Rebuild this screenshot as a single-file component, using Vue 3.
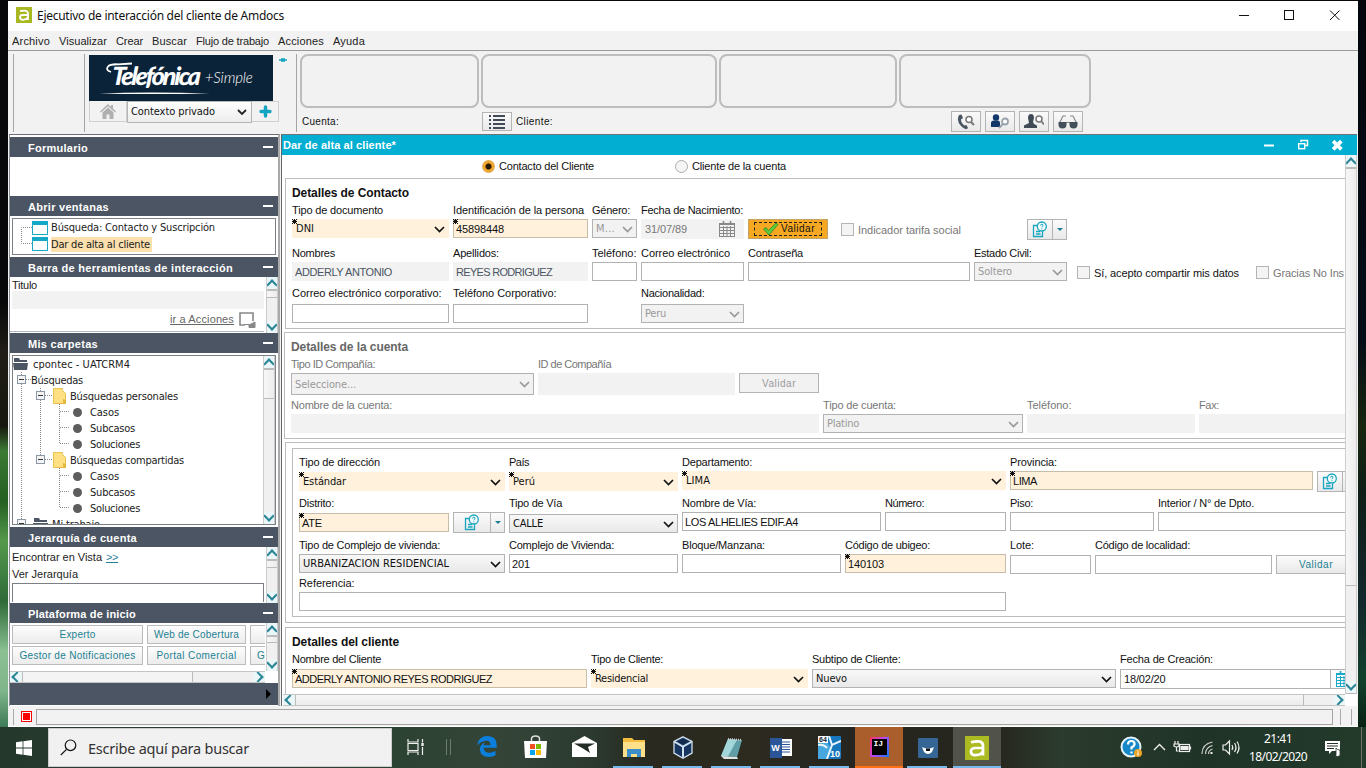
<script setup>
// Sets the letter spacing so that a text run takes the given width.
const vFit = {
  mounted(el, { value }) {
    if (!value) return
    const n = el.textContent.length
    const w = el.getBoundingClientRect().width
    el.style.letterSpacing = `${(value - w) / n}px`
  },
}

const menus = [['Archivo', 38], ['Visualizar', 48], ['Crear', 27], ['Buscar', 35], ['Flujo de trabajo', 73], ['Acciones', 46], ['Ayuda', 32]]
const cards = [179, 236, 178, 192]

const tree = [
  { t: 'Casos', w: 29 }, { t: 'Subcasos', w: 45 }, { t: 'Soluciones', w: 50 },
]
const folders = [{ t: 'Búsquedas personales', w: 108 }, { t: 'Búsquedas compartidas', w: 114 }]

// l: label, lw: label width, w: control width, v: value, vw: value width
const sections = [
  {
    cls: 's1', title: 'Detalles de Contacto', tw: 117,
    rows: [
      { h: 43, f: [
        { k: 'sel', l: 'Tipo de documento', lw: 91, w: 157, v: 'DNI', vw: 18, req: 1 },
        { k: 'inp', l: 'Identificación de la persona', lw: 131, w: 135, v: '45898448', vw: 48, req: 1 },
        { k: 'sel', l: 'Género:', lw: 38, w: 45, v: 'M...', vw: 19, off: 1 },
        { k: 'date', l: 'Fecha de Nacimiento:', lw: 102, w: 103, v: '31/07/89', vw: 42, ro: 1 },
        { k: 'ok', w: 80, v: 'Validar', vw: 34 },
        { k: 'chk', w: 173, pad: 9, v: 'Indicador tarifa social', vw: 103, off: 1 },
        { k: 'ico', w: 40, pad: 9, a: 26 },
      ] },
      { h: 40, f: [
        { k: 'inp', l: 'Nombres', lw: 43, w: 157, v: 'ADDERLY ANTONIO', vw: 97, ro: 1 },
        { k: 'inp', l: 'Apellidos:', lw: 46, w: 135, v: 'REYES RODRIGUEZ', vw: 96, ro: 1 },
        { k: 'inp', l: 'Teléfono:', lw: 44.5, w: 45 },
        { k: 'inp', l: 'Correo electrónico', lw: 89, w: 103 },
        { k: 'inp', l: 'Contraseña', lw: 55, w: 222 },
        { k: 'sel', l: 'Estado Civil:', lw: 57.5, w: 93, v: 'Soltero', vw: 34, off: 1 },
        { k: 'chk', w: 170, pad: 6, v: 'Sí, acepto compartir mis datos', vw: 145 },
        { k: 'chk', w: 120, pad: 5, v: 'Gracias No Ins', vw: 71, off: 1 },
      ] },
      { h: 40, lh: 2, f: [
        { k: 'inp', l: 'Correo electrónico corporativo:', lw: 149.5, w: 157 },
        { k: 'inp', l: 'Teléfono Corporativo:', lw: 103.5, w: 135 },
        { k: 'gap', w: 45 },
        { k: 'sel', l: 'Nacionalidad:', lw: 63.5, w: 103, v: 'Peru', vw: 21, off: 1 },
      ] },
    ],
  },
  {
    cls: 's2', title: 'Detalles de la cuenta', tw: 117, dim: 1,
    rows: [
      { h: 41, f: [
        { k: 'sel', l: 'Tipo ID Compañía:', lw: 84, w: 243, h: 22, v: 'Seleccione...', vw: 61, off: 1 },
        { k: 'inp', l: 'ID de Compañía', lw: 73, w: 197, h: 22, ro: 1 },
        { k: 'btn', w: 80, h: 20, v: 'Validar', vw: 34, off: 1 },
      ] },
      { h: 40, f: [
        { k: 'inp', l: 'Nombre de la cuenta:', lw: 101, w: 528, ro: 1 },
        { k: 'sel', l: 'Tipo de cuenta:', lw: 73, w: 200, v: 'Platino', vw: 32, off: 1 },
        { k: 'inp', l: 'Teléfono:', lw: 44.5, w: 168, ro: 1 },
        { k: 'inp', l: 'Fax:', lw: 20, w: 168, ro: 1 },
      ] },
    ],
  },
  {
    cls: 's3', inner: 1,
    rows: [
      { h: 41, f: [
        { k: 'sel', l: 'Tipo de dirección', lw: 81, w: 206, dy: 1, v: 'Estándar', vw: 43, req: 1 },
        { k: 'sel', l: 'País', lw: 20, w: 169, dy: 1, v: 'Perú', vw: 22, req: 1 },
        { k: 'sel', l: 'Departamento:', lw: 70, w: 324, v: 'LIMA', vw: 24, req: 1 },
        { k: 'inp', l: 'Provincia:', lw: 47, w: 303, v: 'LIMA', vw: 24, req: 1 },
        { k: 'ico', w: 40, a: 26 },
      ] },
      { h: 42, f: [
        { k: 'inp', l: 'Distrito:', lw: 35, w: 150, dy: 1, v: 'ATE', vw: 20, req: 1 },
        { k: 'ico', w: 52, a: 38 },
        { k: 'sel', l: 'Tipo de Vía', lw: 53, w: 169, dy: 2, v: 'CALLE', vw: 30 },
        { k: 'inp', l: 'Nombre de Vía:', lw: 74, w: 199, v: 'LOS ALHELIES EDIF.A4', vw: 113 },
        { k: 'inp', l: 'Número:', lw: 39, w: 121 },
        { k: 'inp', l: 'Piso:', lw: 23, w: 144 },
        { k: 'inp', l: 'Interior / N° de Dpto.', lw: 96, w: 230 },
      ] },
      { h: 38, f: [
        { k: 'sel', l: 'Tipo de Complejo de vivienda:', lw: 141, w: 206, v: 'URBANIZACION RESIDENCIAL', vw: 146 },
        { k: 'inp', l: 'Complejo de Vivienda:', lw: 105, w: 169, v: '201', vw: 18 },
        { k: 'inp', l: 'Bloque/Manzana:', lw: 83, w: 159 },
        { k: 'inp', l: 'Código de ubigeo:', lw: 85, w: 161, v: '140103', vw: 36, req: 1 },
        { k: 'inp', l: 'Lote:', lw: 24, w: 81, dy: 1 },
        { k: 'inp', l: 'Código de localidad:', lw: 95, w: 177, dy: 1 },
        { k: 'btn', w: 80, h: 19, dy: 1, v: 'Validar', vw: 34 },
      ] },
      { h: 40, f: [{ k: 'inp', l: 'Referencia:', lw: 55.5, w: 707 }] },
    ],
  },
  {
    cls: 's4', title: 'Detalles del cliente', tw: 107,
    rows: [
      { h: 40, lh: 1, f: [
        { k: 'inp', l: 'Nombre del Cliente', lw: 89, w: 295, v: 'ADDERLY ANTONIO REYES RODRIGUEZ', vw: 197, req: 1 },
        { k: 'sel', l: 'Tipo de Cliente:', lw: 72, w: 217, v: 'Residencial', vw: 53, req: 1 },
        { k: 'sel', l: 'Subtipo de Cliente:', lw: 88.5, w: 304, v: 'Nuevo', vw: 31 },
        { k: 'date', l: 'Fecha de Creación:', lw: 93, w: 233, v: '18/02/20', vw: 41.5 },
      ] },
    ],
  },
]
const px = (n) => `${n}px`
</script>

<template>
  <div class="screen">
    <div class="desk">
      <div class="edge left"></div>
      <div class="win">
        <header class="title">
          <svg class="appico" width="16" height="16" viewBox="0 0 16 16"><rect width="16" height="16" fill="#a9b821" /><path d="M4 4.200Q12 2.200 12 6.500V13M12 8H7Q4 8 4 10.300 4 12.800 7 12.800 11 12.600 12 10" fill="none" stroke="#fff" stroke-width="1.800" /></svg>
          <span class="ui" v-fit="247">Ejecutivo de interacción del cliente de Amdocs</span>
          <svg class="winbtns" width="110" height="16" viewBox="0 0 110 16" fill="none" stroke="#111" stroke-width="1"><path d="M1 8.500h10" /><rect x="46.500" y="3.500" width="9" height="9" /><path d="M92 3.500l9.500 9.500M101.500 3.500l-9.500 9.500" /></svg>
        </header>
        <nav class="menu"><span v-for="m in menus" :key="m[0]" v-fit="m[1]">{{ m[0] }}</span></nav>

        <div class="tools">
          <i class="vl v1"></i><i class="vl v2"></i>
          <div class="brand">
            <div class="logo">
              <svg class="swoosh" width="184" height="46" viewBox="0 0 184 46"><path d="M10 38.500Q60 36.400 121 38.500 60 39.600 10 38.500z" fill="#fff" /><path d="M22 17Q16 15 19 11.500 21 9 29 9.300L43 8.500" fill="none" stroke="#fff" stroke-width="1.800" /></svg>
              <b v-fit="90">Telefónica</b><em v-fit="48">+Simple</em>
            </div>
            <div class="ctx">
              <div class="home"><svg width="16" height="15" viewBox="0 0 16 15" fill="#b0b0b0"><path d="M8 0L0 7.500l1 1L8 2.200l7 6.300 1-1-3-2.800V1h-2v2z" /><path d="M2.500 8.500L8 3.500l5.500 5V15H9.500v-4.500h-3V15h-4z" /></svg></div>
              <div class="ctxsel tah"><span v-fit="84">Contexto privado</span><svg width="10" height="7" viewBox="0 0 10 7"><path d="M1 1l4 4 4-4" fill="none" stroke="#222" stroke-width="1.800" /></svg></div>
              <div class="plus"><svg width="13" height="13" viewBox="0 0 13 13"><path d="M6.500 2v9M2 6.500h9" stroke="#12a5c2" stroke-width="3.400" stroke-linecap="round" /></svg></div>
            </div>
          </div>
          <svg class="pin" width="8" height="4" viewBox="0 0 8 4"><path d="M0 2h8M2 1h4M2 3h4" stroke="#12a5c2" stroke-width="1.400" /></svg>
          <i class="vl v3"></i>
          <div class="info">
            <div class="cards"><div v-for="(c, i) in cards" :key="i" :style="{ width: px(c) }"></div></div>
            <div class="acct">
              <span class="cu" v-fit="37">Cuenta:</span>
              <div class="ib list"><svg width="17" height="14" viewBox="0 0 17 14"><path d="M0 1h2M0 5h2M0 9h2M0 13h2M4 1h12M4 5h12M4 9h12M4 13h12" stroke="#414b58" stroke-width="2" /></svg></div>
              <span class="cl" v-fit="37">Cliente:</span>
              <div class="ibs">
                <div class="ib"><svg width="18" height="16" viewBox="0 0 18 16"><path d="M2 1Q-1 7 4 12t7 2l-1.500-3-2 .5Q4 9 4 5.500L6 4 4.500.5z" fill="#4b5461" /><circle cx="12" cy="5.500" r="3" fill="#fff" stroke="#777" stroke-width="1.500" /><path d="M14 8l3 3" stroke="#777" stroke-width="2" /></svg></div>
                <div class="ib"><svg width="20" height="16" viewBox="0 0 20 16"><circle cx="6" cy="3.500" r="3.200" fill="#12376b" /><path d="M1 13V9Q1 6.500 4 6.500h4Q10 6.500 10 9v4z" fill="#12376b" /><circle cx="15" cy="7.500" r="3" fill="#fff" stroke="#9aa4ae" stroke-width="1.800" /><path d="M13 10l-4 4" stroke="#9aa4ae" stroke-width="2" /></svg></div>
                <div class="ib"><svg width="20" height="16" viewBox="0 0 20 16"><path d="M4 4Q4 0 7 0t3 4L9 8l1 2 3 1.500V14H0v-2.500L5 9z" fill="#414b58" /><circle cx="15" cy="5" r="3" fill="#fff" stroke="#777" stroke-width="1.500" /><path d="M17 7l3 3.500" stroke="#777" stroke-width="1.800" /></svg></div>
                <div class="ib"><svg width="20" height="16" viewBox="0 0 20 16"><path d="M1.500 9L5 2h3M18.500 9L15 2h-3M8 8.500h4" fill="none" stroke="#888" stroke-width="1.200" /><path d="M.5 8h8v2.500a4 4 0 0 1-8 0zM11.500 8h8v2.500a4 4 0 0 1-8 0z" fill="#454f5b" /></svg></div>
              </div>
            </div>
          </div>
        </div>

        <div class="main">
          <aside>
            <div class="hd"><b v-fit="60">Formulario</b><i></i></div>
            <div class="bd b1"></div>
            <div class="hd"><b v-fit="81">Abrir ventanas</b><i></i></div>
            <div class="bd b2"><div class="wins tah">
              <svg class="wl" width="12" height="22" viewBox="0 0 12 22"><path d="M11 2.500H.5v16H11" fill="none" stroke="#888" stroke-dasharray="1 1" /></svg>
              <div class="wlist">
                <div><svg width="16" height="14" viewBox="0 0 16 14"><rect x=".5" y=".5" width="15" height="13" fill="#fff" stroke="#12a9c6" /><rect y="0" width="16" height="4" fill="#12a9c6" /></svg><span v-fit="164">Búsqueda: Contacto y Suscripción</span></div>
                <div><svg width="16" height="14" viewBox="0 0 16 14"><rect x=".5" y=".5" width="15" height="13" fill="#fff" stroke="#12a9c6" /><rect y="0" width="16" height="4" fill="#12a9c6" /></svg><span class="on"><span v-fit="99">Dar de alta al cliente</span></span></div>
              </div>
            </div></div>
            <div class="hd"><b v-fit="205">Barra de herramientas de interacción</b><i></i></div>
            <div class="bd b3">
              <div class="b3l"><span v-fit="25">Titulo</span><p></p><div class="go"><u v-fit="64">ir a Acciones</u><svg width="18" height="16" viewBox="0 0 18 16"><path d="M6 13H1V1h13v8" fill="none" stroke="#888" stroke-width="1.600" /><path d="M5 12.500h6M10 13l6-3v5.500h-6z" fill="#888" stroke="#888" /></svg></div></div>
              <div class="vs"><i class="up"></i><i class="th"></i><i class="dn"></i></div>
            </div>
            <div class="hd"><b v-fit="70">Mis carpetas</b><i></i></div>
            <div class="bd b4"><div class="tree tah">
              <div class="nodes">
                <svg class="lines" width="70" height="170" viewBox="0 0 70 170"><path d="M8.500 16v152M11 23.500h7M27.500 32v72M32 39.500h7M32 103.500h7M46.500 48v40M47 55.500h10M47 71.500h10M47 87.500h10M46.500 112v40M47 119.500h10M47 135.500h10M47 151.500h10" fill="none" stroke="#888" stroke-dasharray="1 1" /><g fill="#f4f4f4" stroke="#8a97a5"><rect x="4.500" y="19.500" width="8" height="8" /><rect x="23.500" y="35.500" width="8" height="8" /><rect x="23.500" y="99.500" width="8" height="8" /><rect x="4.500" y="163.500" width="8" height="8" /></g><path d="M6 23.500h5M25 39.500h5M25 103.500h5M6 167.500h5" stroke="#333" /></svg>
                <div class="n n0"><svg width="15" height="12" viewBox="0 0 15 12"><path d="M1 3V0h5l1 2h7v2H1zM0 5h15l-1 7H1z" fill="#4b5563" /></svg><span v-fit="97">cpontec - UATCRM4</span></div>
                <div class="n n1"><span v-fit="52">Búsquedas</span></div>
                <template v-for="f in folders" :key="f.t">
                  <div class="n n2"><svg width="13" height="16" viewBox="0 0 13 16"><path d="M.5.5h9v2l3 3v10H.5z" fill="#ffe184" stroke="#e8c24c" /><path d="M10 11v5h3v-4z" fill="#e5b93c" /></svg><span v-fit="f.w">{{ f.t }}</span></div>
                  <div v-for="t in tree" :key="t.t" class="n n3"><i></i><span v-fit="t.w">{{ t.t }}</span></div>
                </template>
                <div class="n n4"><svg width="15" height="12" viewBox="0 0 15 12"><path d="M1 3V0h5l1 2h7v2H1zM0 5h15l-1 7H1z" fill="#4b5563" /></svg><span v-fit="48">Mi trabajo</span></div>
              </div>
              <div class="vs"><i class="up"></i><i class="th big"></i><i class="dn"></i></div>
            </div></div>
            <div class="hd"><b v-fit="109">Jerarquía de cuenta</b><i></i></div>
            <div class="bd b5">
              <div class="b5l"><div><span v-fit="90">Encontrar en Vista</span><u v-fit="12">&gt;&gt;</u></div><div><span v-fit="66">Ver Jerarquía</span></div><p></p></div>
              <div class="vs"><i class="up"></i><i class="th"></i><i class="dn"></i></div>
            </div>
            <div class="hd"><b v-fit="108">Plataforma de inicio</b><i></i></div>
            <div class="bd b6">
              <div class="b6t">
                <div class="links">
                  <div class="lk"><span v-fit="36">Experto</span></div><div class="lk"><span v-fit="85">Web de Cobertura</span></div><div class="lk"></div>
                  <div class="lk"><span v-fit="116">Gestor de Notificaciones</span></div><div class="lk"><span v-fit="80">Portal Comercial</span></div><div class="lk cut"><span>G</span></div>
                </div>
                <div class="vs"><i class="up"></i><i class="th sm"></i><i class="dn"></i></div>
              </div>
              <div class="hs"><i class="lf"></i><i class="th"></i><i class="rt"></i></div>
            </div>
            <div class="foot"><svg width="6" height="10" viewBox="0 0 6 10"><path d="M0 0l5 5-5 5z" fill="#000" /></svg></div>
          </aside>

          <section class="mdi">
            <div class="mt"><b v-fit="113">Dar de alta al cliente*</b>
              <svg width="90" height="14" viewBox="0 0 90 14"><path d="M1 7.500h10" stroke="#fff" stroke-width="2" /><path d="M38 4V2.500h6.500v5H42" fill="none" stroke="#fff" stroke-width="1.500" /><rect x="35.700" y="5.700" width="6" height="5" fill="none" stroke="#fff" stroke-width="1.400" /><path d="M71.500 4.500l5.500 5.500M77 4.500L71.500 10" stroke="#fff" stroke-width="3.800" stroke-linecap="square" /></svg>
            </div>
            <div class="mc">
              <div class="pane">
                <div class="radios"><i class="rd on"></i><span v-fit="95">Contacto del Cliente</span><i class="rd two"></i><span v-fit="94">Cliente de la cuenta</span></div>
                <div v-for="s in sections" :key="s.cls" class="sec" :class="[s.cls, { dim: s.dim }]">
                  <h3 v-if="s.title"><span v-fit="s.tw">{{ s.title }}</span></h3>
                  <div :class="{ inner: s.inner }">
                    <div v-for="(r, ri) in s.rows" :key="ri" class="row" :style="{ height: px(r.h) }">
                      <div v-for="(f, fi) in r.f" :key="fi" class="fld" :style="{ width: px(f.w), marginLeft: px(f.pad || 0) }">
                        <div class="lab" :style="{ height: px(17 + (r.lh || 0)) }"><span v-if="f.l" v-fit="f.lw">{{ f.l }}</span></div>
                        <div v-if="f.k !== 'gap'" class="ctl" :class="[f.k, { req: f.req, off: f.off, ro: f.ro }]" :style="{ marginTop: px(f.dy || 0), height: f.h ? px(f.h) : null }">
                          <svg v-if="f.req" class="ast" width="5" height="5" viewBox="0 0 5 5" shape-rendering="crispEdges"><path d="M2 0h1v5H2zM0 2h5v1H0zM1 1h3v3H1zM0 0h1v1H0zM4 0h1v1H4zM0 4h1v1H0zM4 4h1v1H4z" fill="#111" /></svg>
                          <template v-if="f.k === 'ico'">
                            <div class="ia" :style="{ width: px(f.a) }"><svg width="16" height="17" viewBox="0 0 16 17" fill="none" stroke="#1aa6c1" stroke-width="1.300"><path d="M5 4.500H1.500v11h9v-5M4 10.500h4M4 13h4.500" /><circle cx="9.800" cy="5.500" r="4.500" fill="#f4fbfc" /><path d="M8.500 4.500Q8.700 3 10 3.200t1 1.600Q10 5.300 9.900 6.300M9.900 7.300v1" stroke-width="1" /></svg></div>
                            <div class="ibx"><svg width="6" height="3" viewBox="0 0 6 3"><path d="M0 0h6L3 3z" fill="#1b7f95" /></svg></div>
                          </template>
                          <template v-else>
                            <i v-if="f.k === 'chk'" class="box"></i>
                            <svg v-if="f.k === 'ok'" width="17" height="14" viewBox="0 0 17 14"><path d="M1.500 7L4 5.500l2.500 3L14 1l2 1.500L7 13z" fill="#5fcb3c" stroke="#2d8a1c" stroke-width=".8" /></svg>
                            <span v-if="f.v" v-fit="f.vw">{{ f.v }}</span>
                            <svg v-if="f.k === 'sel'" class="chev" width="11" height="7" viewBox="0 0 11 7"><path d="M1 1l4.500 4.500L10 1" fill="none" stroke="currentColor" stroke-width="1.700" /></svg>
                            <div v-if="f.k === 'date'" class="cal"><svg width="16" height="16" viewBox="0 0 16 16" fill="none" stroke="currentColor" stroke-width="1"><rect x=".5" y="2.500" width="15" height="13" /><path d="M1 3.500h14M.5 6.500h15M.5 9.500h15M.5 12.500h15M4.500 5v10M8 5v10M11.500 5v10" /><path d="M4.500 0v4M11.500 0v4" stroke-width="1.600" /></svg></div>
                          </template>
                        </div>
                      </div>
                    </div>
                  </div>
                </div>
              </div>
              <div class="vs pv"><i class="up"></i><i class="th"></i><i class="dn"></i></div>
            </div>
            <div class="hs ph"><i class="lf"></i><i class="th"></i><i class="rt"></i></div>
          </section>
        </div>
        <div class="status"><i class="sv"></i><i class="red"></i><i class="sb"></i><i class="sv e"></i><i class="sv f"></i></div>
      </div>
      <div class="edge right"></div>
    </div>

    <footer class="task">
      <div class="start"><svg width="16" height="16" viewBox="0 0 16 16" fill="#fff"><path d="M0 2.300l6.600-1v6.300H0zM7.400 1.200L16 0v7.600H7.400zM0 8.400h6.600v6.300l-6.600-1zM7.400 8.400H16V16l-8.600-1.200z" /></svg></div>
      <div class="search"><svg width="17" height="17" viewBox="0 0 17 17" fill="none" stroke="#111" stroke-width="1.200"><circle cx="10.500" cy="6.300" r="5.300" /><path d="M6.500 10.300L.8 16" /></svg><span v-fit="161">Escribe aquí para buscar</span></div>
      <div class="tb tv"><svg width="18" height="16" viewBox="0 0 18 16" fill="none" stroke="#eee" stroke-width="1.200"><path d="M1 0v3h10V0M1 16v-3h10v3M1 4.500h10v7H1zM15.500 0v3.500M15.500 8v8" /><path d="M15.500 4v3" stroke-width="2.400" /></svg></div>
      <div class="tb sep"><i></i><i></i></div>
      <div class="tb"><svg width="20" height="21" viewBox="0 0 20 21"><path d="M0 9.500Q1.500 0 10.500 0 20 .5 19.700 9v2.700H6.500Q7 16.500 12.500 16.800q3 0 6-1.700V19.300Q16 21 11.800 21 3.500 20.700 2.800 13.500 3 8.500 8 6.200q-1.300 1.400-1.500 3h7Q13.400 5 10 4.800 4 4.800 0 9.500z" fill="#0c7fdc" /></svg></div>
      <div class="tb"><svg width="23" height="24" viewBox="0 0 23 24"><path d="M7.500 7V4q0-3 4-3t4 3v3" fill="none" stroke="#ddd" stroke-width="1.500" /><path d="M0 6h23l-1 17H1z" fill="#fff" /><path d="M6 9h5v5H6z" fill="#f25022" /><path d="M12 9h5v5h-5z" fill="#7fba00" /><path d="M6 15h5v5H6z" fill="#00a4ef" /><path d="M12 15h5v5h-5z" fill="#ffb900" /></svg></div>
      <div class="tb"><svg width="25" height="21" viewBox="0 0 25 21"><path d="M0 7L12.500 0 25 7v14H0z" fill="#fff" /><path d="M2 7.500h21l-7 3.500 2 6-7-4.500z" fill="#222b24" /></svg></div>
      <div class="tb run"><svg width="22" height="19" viewBox="0 0 22 19"><path d="M0 0h9l2 2h11v17H0z" fill="#f3bd41" /><path d="M0 4h22v15H0z" fill="#ffe08a" /><path d="M4 19v-8h14v8h-4v-3H8v3z" fill="#3c8ecb" /></svg></div>
      <div class="tb run"><svg width="20" height="23" viewBox="0 0 20 23"><path d="M10 .8l9 4.700v11.500l-9 5.200-9-5.200V5.500z" fill="#17365f" stroke="#d2e1f0" stroke-width="1.300" /><path d="M1 5.500l9 5 9-5M10 10.500v11" fill="none" stroke="#d2e1f0" stroke-width="2" /><path d="M5 5.500l5-2.500 5 2.500-5 2.700z" fill="#152b4b" /></svg></div>
      <div class="tb run"><svg width="22" height="22" viewBox="0 0 22 22"><path d="M7 2l14 1-5 17-16-1z" fill="#5f9ea6" /><path d="M7 2l9 .7L7 19.500l-7-.5z" fill="#a3d6da" /><path d="M0 19l16 1 1 2H3z" fill="#dfe5e5" /><path d="M7 2l14 1" stroke="#ccc" stroke-dasharray="1 1" stroke-width="2" /></svg></div>
      <div class="tb run"><div class="word"><b>W</b><svg width="10" height="17" viewBox="0 0 10 17"><rect width="10" height="17" fill="#fff" /><path d="M0 3h8M0 5.500h8M0 8h8M0 10.500h8M0 13h8" stroke="#2a5699" /></svg></div></div>
      <div class="tb run"><div class="vm"><svg width="23" height="23" viewBox="0 0 23 23"><rect width="23" height="23" rx="1" fill="#1878bd" /><path d="M0 7h10l3 5-4 11H0z" fill="#46a8df" /><path d="M11 0l3 9 9-4M14 9l-5 14M0 9q6-1 9 3" stroke="#e9f5fd" stroke-width="2" fill="none" /><path d="M0 0h10v7H0z" fill="#fff" /></svg><b class="v64">64</b><b class="v10">10</b></div></div>
      <div class="tb ij"><div class="ijb"><b>IJ</b></div></div>
      <div class="tb run"><svg width="20" height="20" viewBox="0 0 20 20"><rect width="20" height="20" rx="1" fill="#356695" /><path d="M4 9Q10 12 16 9l-2 5q-4 4-8 0z" fill="#fff" /><path d="M8 10.500h4v2.500H8z" fill="#111" /></svg></div>
      <div class="tb act"><svg width="24" height="24" viewBox="0 0 16 16"><rect width="16" height="16" fill="#adbb22" /><path d="M4 4.200Q12 2.200 12 6.500V13M12 8H7Q4 8 4 10.300 4 12.800 7 12.800 11 12.600 12 10" fill="none" stroke="#fff" stroke-width="1.800" /></svg></div>
      <div class="tray">
        <svg width="126" height="26" viewBox="0 0 126 26" fill="none" stroke="#eee" stroke-width="1.200">
          <circle cx="11" cy="12" r="9.500" fill="#1688c8" stroke="#e6f3fa" stroke-width="2" /><path d="M8 9.500Q8 6 11.300 6t3.300 3.300Q14.300 11 11.500 12.500v2M11.500 16.500v2" stroke="#fff" stroke-width="2.200" /><circle cx="18" cy="18" r="4" fill="#eba528" stroke="none" /><path d="M18 15.500v1M18 17.500v3" stroke="#fff" />
          <path d="M34 15l5.500-5.500L45 15" stroke-width="1.400" /><rect x="59.500" y="9.500" width="10" height="7" /><path d="M61 11.500h7v3h-7z" fill="#eee" /><path d="M55 6v3M58 6v3M54 9h5v2q-2.500 2-5 0zM56.500 12v4h2M70.500 11.500v3" />
          <path d="M82 19Q82 9 92.500 7M85.500 19Q85.500 12.500 92.500 10.500M88.500 19Q88.500 15.500 92.500 14" stroke="#ccc" /><path d="M91.500 17v2" stroke-width="2" /><path d="M103 10h2.500l4-4v13l-4-4H103zM112 10q1.500 2.500 0 5M114.500 8q3 4.500 0 9M117 6.500q4 6 0 12" />
        </svg>
      </div>
      <div class="clock"><span v-fit="28">21:41</span><span v-fit="58">18/02/2020</span></div>
      <svg class="note" width="18" height="18" viewBox="0 0 18 18"><path d="M1 1h15v10h-8l-3 3v-3H1z" fill="#fff" /><path d="M3 3.500h11M3 6h11M3 8.500h7" stroke="#25332a" /><path d="M12 15.500V8q1 2 4 2v3q1 3-2 3.500-3 .5-2-1" fill="#fff" stroke="#25332a" stroke-width=".8" /></svg>
      <i class="show"></i>
    </footer>
  </div>
</template>

<style>
html, body { margin: 0; background: #000; overflow: hidden; }
</style>

<style scoped>
* { box-sizing: border-box; }
.screen { width: 1366px; height: 768px; overflow: hidden; display: flex; flex-direction: column; background: #08080a; font: 11px/16px "Liberation Sans", Arial, sans-serif; color: #111; }
span, b, em, u { white-space: nowrap; flex: none; display: inline-block; }
svg { display: block; flex: none; }
i { display: block; flex: none; }
p { margin: 0; }
.tah { font-family: "DejaVu Sans Condensed", "Noto Sans", sans-serif; font-size: 11px; }
.desk { display: flex; height: 727px; padding-top: 1px; }
.edge.left { width: 8px; background: linear-gradient(#08080a 0, #08080a 300px, #201d17 350px, #17170f 425px, #3c7a34 450px, #246022 500px, #54994c 540px, #2f6a38 600px, #8ac092 650px, #7fb58a 690px, #3e7a58); }
.edge.right { width: 8px; background: linear-gradient(#02060c 0, #040d16 340px, #18250f 425px, #0d1e16 490px, #14272b 600px, #12402c 680px, #092014); }
.win { width: 1350px; height: 726px; background: #f2f2f2; display: flex; flex-direction: column; }
.title { height: 30px; background: #fff; display: flex; align-items: center; padding: 0 18px 2px 8px; }
.ui { font: 12px/20px "Noto Sans", sans-serif; margin-left: 5px; margin-top: 2px; }
.winbtns { margin-left: auto; margin-right: -8px; }
.menu { height: 20px; border-bottom: 1px solid #9a9a9a; display: flex; gap: 9px; padding: 2px 0 0 4px; line-height: 17px; color: #222; }
.tools { height: 83px; display: flex; padding-top: 3px; }
.vl { width: 1px; height: 78px; background: #a5a5a5; }
.v1 { margin-left: 5px; }
.v2 { margin-left: 70px; }
.v3 { margin-left: 9px; }
.brand { margin-left: 4px; width: 190px; }
.logo { width: 184px; height: 46px; margin-top: 1px; background: #0b2338; color: #fff; position: relative; display: flex; padding-left: 23px; }
.logo b { font: italic 900 25px/41px Lato, sans-serif; transform: skewX(-4deg); }
.logo em { font: italic 300 15px/45px Lato, sans-serif; margin-left: 6px; }
.swoosh { position: absolute; left: 0; top: 0; }
.ctx { display: flex; height: 22px; }
.home { width: 38px; height: 21px; border: 1px solid #cfcfcf; border-top: 0; display: grid; place-items: center; }
.ctxsel { width: 125px; height: 22px; border: 1px solid #b5b5b5; background: linear-gradient(#fff, #ececec); display: flex; align-items: center; justify-content: space-between; padding: 0 4px 0 3px; }
.plus { width: 27px; height: 21px; border: 1px solid #cfcfcf; border-left: 0; display: grid; place-items: center; }
.pin { margin: 4px 0 0; }
.info { margin-left: 3px; width: 1050px; }
.cards { display: flex; gap: 2px; padding-left: 0; }
.cards div { height: 54px; border: 2px solid #bdbdbd; border-radius: 8px; }
.acct { display: flex; height: 24px; align-items: center; margin-top: 1px; font-size: 10px; padding-left: 2px; }
.acct span { margin-top: 2px; }
.ib { width: 30px; height: 21px; border: 1px solid #b4b4b4; background: linear-gradient(#fafafa, #e9e9e9); display: grid; place-items: center; }
.list { margin: 1px 0 0 143px; height: 19px; }
.cl { margin-left: 4px; }
.ibs { display: flex; gap: 4px; margin: 1px 0 0 398px; }
.main { display: flex; height: 572px; }
aside { width: 271px; margin-left: 1px; height: 572px; border: 1px solid #8a8f96; border-bottom: 0; border-right: 2px solid #a9a9a9; border-top: 1px solid #6b6f75; padding-top: 2px; background: #fff; }
.hd { height: 20px; background: #4b5563; color: #fff; display: flex; align-items: center; padding: 2px 5px 0 18px; justify-content: space-between; line-height: 18px; }
.hd i { width: 10px; height: 2px; background: #fff; margin-top: -2px; }
.b1 { height: 39px; }
.b2 { height: 41px; padding: 2px; }
.wins { height: 37px; width: 264px; border: 1px solid #7b8087; display: flex; padding: 1px 0 0 8px; }
.wl { margin-top: 5px; }
.wlist > div { display: flex; height: 16px; align-items: center; gap: 3px; margin-left: -1px; }
.wlist .on { background: #fbe0ad; height: 15px; line-height: 15px; padding-right: 2px; }
.bd { color: #1c1c1c; }
.b3 { height: 56px; display: flex; justify-content: space-between; }
.b3l { padding-left: 2px; width: 254px; border-bottom: 1px solid #b3b9c2; margin-bottom: 1px; }
.b3l > span { display: block; width: max-content; }
.b3l p { height: 18px; background: #f2f2f2; margin-top: -2px; }
.go { display: flex; justify-content: flex-end; padding-right: 7px; gap: 5px; color: #666; margin-top: 3px; align-items: flex-start; }
.go u { line-height: 14px; }
.vs { width: 12px; display: flex; flex-direction: column; background: #f0f0f0; border: 1px solid #ccc; border-width: 0 1px; height: 100%; }
.vs i { width: 100%; }
.vs .up, .vs .dn, .hs .lf, .hs .rt { background: #eaf6f8; height: 12px; display: grid; place-items: center; overflow: hidden; }
.vs .up::before, .vs .dn::before, .hs .lf::before, .hs .rt::before { content: ""; width: 6px; height: 6px; border: solid #2a8596; border-width: 2px 0 0 2px; transform: translateY(2px) rotate(45deg); }
.vs .dn { margin-top: auto; }
.vs .dn::before { transform: translateY(-2px) rotate(225deg); }
.hs .lf::before { transform: translateX(1px) rotate(-45deg); }
.hs .rt::before { transform: translateX(-1px) rotate(135deg); }
.vs .th { height: 9px; border: 1px solid #bbb; border-width: 2px 0 1px; background: linear-gradient(90deg, #f7f7f7, #ececec); }
.b4 { height: 174px; padding: 2px; }
.tree { height: 170px; width: 264px; border: 1px solid #7b8087; display: flex; justify-content: space-between; overflow: hidden; }
.nodes { position: relative; height: 168px; }
.lines { position: absolute; left: 0; top: 0; }
.n { position: relative; height: 16px; line-height: 16px; display: flex; align-items: center; gap: 5px; }
.n span { margin-top: 2px; }
.n1 { padding-left: 18px; }
.n2 { padding-left: 40px; gap: 4px; }
.n3 { padding-left: 60px; gap: 8px; }
.n3 i { width: 9px; height: 9px; border-radius: 50%; background: #5d5d5d; }
.n4 { padding-left: 20px; gap: 4px; }
.vs .th.big { height: 31px; }
.b5 { height: 56px; display: flex; justify-content: space-between; }
.b5l { padding: 1px 0 0 2px; width: 254px; }
.b5l div { display: flex; gap: 4px; height: 17px; line-height: 18px; }
.b5l u { color: #1f7f98; }
.b5l p { height: 19px; margin-top: 1px; width: 252px; border: 1px solid #7b8087; border-bottom: 0; }
.b6 { height: 60px; }
.b6t { display: flex; height: 48px; justify-content: space-between; }
.links { width: 255px; overflow: hidden; display: grid; grid-template-columns: 131px 99px 60px; grid-template-rows: 19px 19px; column-gap: 4px; row-gap: 2px; padding: 2px 0 0 2px; }
.lk { border: 1px solid #bcbcbc; background: linear-gradient(#fdfdfd, #ececec); color: #237f91; text-align: center; line-height: 17px; font-size: 10px; }
.cut { text-align: left; padding-left: 6px; }
.vs .th.sm { height: 8px; }
.hs { display: flex; height: 12px; background: #f0f0f0; border: 1px solid #c4c4c4; border-width: 1px 0; }
.hs .lf, .hs .rt { width: 12px; height: 100%; }
.b6 .hs { width: 255px; }
.b6 .hs .th { width: 171px; background: #f4f4f4; border: solid #bbb; border-width: 0 1px; }
.hs .rt { margin-left: auto; }
.foot { height: 22px; background: #4b5563; display: flex; justify-content: flex-end; align-items: center; padding-right: 6px; }
.mdi { margin-left: 1px; width: 1076px; border-left: 1px solid #63676c; border-top: 1px solid #6e7277; padding-left: 1px; background: #fff; }
.mt { height: 20px; margin-left: -1px; background: #02aed2; color: #fff; display: flex; justify-content: space-between; align-items: center; padding: 0 4px 0 1px; }
.mc { display: flex; height: 539px; }
.pane { width: 1062px; overflow: hidden; background: #fff; height: 539px; }
.radios { display: flex; height: 22px; margin-bottom: 1px; padding-left: 199px; align-items: center; }
.rd { width: 13px; height: 13px; border-radius: 50%; border: 1px solid #aaa; background: #f5f5f5; margin-right: 4px; }
.rd.on { border: 0; background: radial-gradient(circle, #2a1a05 0 2.600px, #efa62e 3.500px 5px, #d9b06d 6.500px); }
.rd.two { margin-left: 81px; }
.sec { width: 1300px; border: 1px solid #bcbcbc; margin-left: 2px; padding-left: 6px; }
.s1 { height: 151px; }
.s2 { height: 107px; margin: 3px 0 0 1px; }
.s3 { height: 181px; margin-top: 3px; padding-top: 5px; }
.s4 { height: 120px; margin-top: 4px; }
h3 { margin: 0; height: 23px; font: bold 12px/28px "Liberation Sans", Arial, sans-serif; }
.inner { border: 1px solid #bcbcbc; height: 169px; padding: 5px 0 0 6px; }
.row { display: flex; gap: 4px; align-items: flex-start; }
.fld { flex: none; }
.lab { line-height: 16px; height: 17px; }
.dim .lab, .dim h3 { color: #777; }
.dim h3 { color: #666; }
.ctl { position: relative; height: 19px; display: flex; align-items: center; }
.inp, .sel, .date { border: 1px solid #b2b2b2; background: #fff; padding-left: 3px; }
.inp { padding-left: 2px; }
.sel { font-family: "DejaVu Sans Condensed", "Noto Sans", sans-serif; background: linear-gradient(#f8f8f8, #e9e9e9); }
.sel span { margin-top: 1px; }
.sel.req { background: #fff1dc; border-color: #fff1dc; }
.inp.req { background: #fff1dc; border-color: #c7bda9; }
.sel.off { background: #f2f2f2; color: #999; }
.ro { background: #f2f2f2; border-color: #f2f2f2; color: #4b5563; }
.date.ro { color: #777; height: 20px; }
.date { height: 20px; }
.chev { position: absolute; right: 3px; top: 50%; margin-top: -3px; }
.ast { position: absolute; left: -1px; top: -1px; }
.cal { position: absolute; right: 8px; top: 1px; color: #888; }
.date:not(.ro) .cal { right: 0; top: -1px; height: 20px; width: 22px; border: 1px solid #b2b2b2; padding: 1px 0 0 5px; color: #1aa9c6; background: #fafafa; }
.ok { height: 20px; background: #f7a823; border: 1px solid #c4a465; gap: 2px; padding-left: 13px; font-size: 10px; }
.ok::after { content: ""; position: absolute; inset: 2px 5px; border: 1px dashed #222; }
.btn { border: 1px solid #b4b4b4; background: linear-gradient(#fbfbfb, #e9e9e9); justify-content: center; color: #237f91; font-size: 10px; }
.btn span { margin-top: 1px; }
.btn.off { background: #f2f2f2; color: #999; }
.chk { height: 21px; gap: 4px; }
.chk.off { color: #777; }
.box { width: 13px; height: 13px; border: 1px solid #b4b4b4; background: #f4f4f4; }
.ico { height: 21px; }
.ia, .ibx { height: 21px; border: 1px solid #b4b4b4; background: linear-gradient(#fbfbfb, #e9e9e9); display: grid; place-items: center; }
.ibx { flex: 1; border-left: 0; }
.pv { width: 12px; border-bottom: 1px solid #bbb; }
.vs.pv .th { height: 419px; }
.ph { width: 1062px; height: 12px; }
.ph .th { width: 1009px; background: linear-gradient(#f6f6f6, #ececec); border: solid #bbb; border-width: 0 1px; }
.status { height: 21px; display: flex; padding: 3px 0 0 5px; border-bottom: 1px solid #fff; }
.sv { width: 1px; height: 16px; background: #aaa; }
.red { width: 11px; height: 11px; margin: 2px 4px 0 7px; background: #f00; border: 1px solid #f00; box-shadow: inset 0 0 0 1px #fff; }
.sb { width: 1297px; height: 16px; border: 1px solid #a5a5a5; }
.sv.e { margin-left: 7px; }
.sv.f { margin-left: 10px; }
.task { height: 41px; display: flex; background: linear-gradient(90deg, #25382c 0, #2c4233 400px, #344538 500px, #2c3a30 590px, #29291f 650px, #2d2b20 750px, #26251f 850px, #26271f 1000px, #2b3b2d 1060px, #1f3427 1200px, #233a2b); color: #fff; }
.start { width: 48px; display: grid; place-items: center; }
.search { width: 344px; margin: 1px 0; background: #f1f1f1; border: 1px solid #ccc; display: flex; align-items: center; gap: 11px; padding-left: 11px; color: #333; font: 14.5px/20px "Noto Sans", sans-serif; }
.tb { width: 49px; height: 41px; display: grid; place-items: center; border-bottom: 2px solid transparent; }
.tv { width: 48px; }
.sep { width: 15px; display: flex; gap: 3px; align-items: center; padding-left: 6px; }
.sep i { width: 1px; height: 16px; background: #6d7a70; }
.sep + .tb { margin-left: 7px; }
.run { border: 0; box-sizing: border-box; width: 49px; position: relative; }
.run::after, .act::after { content: ""; position: absolute; left: 4px; right: 5px; bottom: 0; height: 2px; background: #76b9ed; }
.word { display: flex; align-items: center; }
.word b { width: 12px; height: 20px; background: #2a5699; font: bold 9px/20px "Liberation Sans", sans-serif; text-align: center; }
.vm { position: relative; }
.v64, .v10 { position: absolute; font: bold 7px/7px "Liberation Sans", sans-serif; }
.v64 { left: 1px; top: 0; color: #123; }
.v10 { right: 1px; bottom: 0; font-size: 9px; line-height: 9px; }
.ij { width: 48px; margin-left: 1px; background: #a95e2c; border-bottom: 2px solid #fd7013; }
.ijb { width: 19px; height: 20px; background: linear-gradient(120deg, #fe315d, #b74af7 50%, #087cfa); padding: 2px; }
.ijb b { display: block; height: 16px; background: #000; font: bold 8px/10px "Liberation Mono", monospace; padding-left: 2px; }
.act { width: 48px; margin-left: 1px; background: #51534b; position: relative; border: 0; }
.act::after { left: 0; right: 0; }
.tray { margin-left: auto; margin-right: -3px; display: flex; align-items: center; }
.clock { width: 70px; display: flex; flex-direction: column; align-items: center; font: 12px/18px "Noto Sans", sans-serif; padding-top: 3px; }
.note { margin: 13px 19px 0 11px; }
.show { width: 1px; height: 41px; background: #67756b; margin-right: 4px; }
</style>
